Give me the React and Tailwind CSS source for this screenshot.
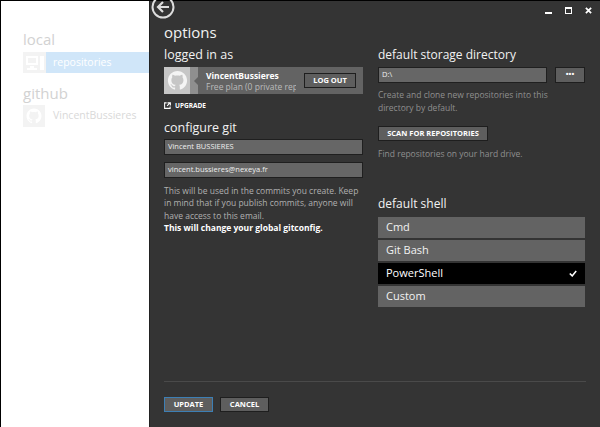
import React from 'react';

const GithubMark = ({ className }) => (
    <svg viewBox="0 0 24 24" className={className} fill="currentColor">
        <path d="M12 2C6.5 2 2 6.5 2 12c0 4.4 2.9 8.2 6.8 9.5.5.1.7-.2.7-.5v-1.700c-2.800.6-3.400-1.300-3.400-1.300-.5-1.200-1.100-1.500-1.100-1.500-.9-.6.1-.6.1-.6 1 .1 1.500 1 1.500 1 .9 1.500 2.300 1.100 2.900.8.1-.6.3-1.100.6-1.300-2.200-.3-4.500-1.100-4.500-5 0-1.100.4-2 1-2.700-.1-.3-.4-1.300.1-2.700 0 0 .8-.3 2.700 1 .8-.2 1.700-.3 2.500-.3s1.700.1 2.500.3c1.900-1.300 2.700-1 2.700-1 .5 1.400.2 2.400.1 2.700.6.7 1 1.600 1 2.700 0 3.900-2.300 4.700-4.500 5 .4.3.7.9.7 1.900V21c0 .3.2.6.7.5C19.100 20.200 22 16.400 22 12c0-5.500-4.500-10-10-10z" />
    </svg>
);

const ShellRow = ({ label, active }) => (
    <div className={`h-[21px] flex items-center justify-between pl-[8px] pr-[8px] text-[11px] ${active ? 'bg-black text-white' : 'bg-[#636363] text-[#f2f2f2]'}`}>
        <span>{label}</span>
        {active && (
            <svg viewBox="0 0 10 8" className="w-[8px] h-[7px]" fill="none" stroke="currentColor" strokeWidth="2">
                <path d="M1 4l3 3 5-6" />
            </svg>
        )}
    </div>
);

const Btn = ({ children, className = '' }) => (
    <button className={`h-[15px] bg-[#5e5e5e] border border-[#1e1e1e] text-[7.5px] font-bold text-white flex items-center justify-center ${className}`}>
        {children}
    </button>
);

const Field = ({ value, className = '' }) => (
    <div className={`h-[16px] bg-[#666666] border border-[#1f1f1f] px-[3px] flex items-center text-[7.5px] text-[#eeeeee] ${className}`}>
        {value}
    </div>
);

export default function App() {
    return (
        <div className="w-[600px] h-[427px] overflow-hidden flex bg-black pt-px pl-px font-['Open_Sans',sans-serif]">
            {/* sidebar */}
            <div className="w-[148px] shrink-0 bg-white pl-[22px] pt-[30px]">
                <div className="text-[15px] leading-[16px] text-[#d2d2d2]">local</div>
                <div className="flex mt-[5px] h-[21px]">
                    <div className="w-[23px] bg-[#f3f3f3] flex items-center justify-center">
                        <svg viewBox="0 0 20 16" className="w-[20px] h-[16px]" fill="#ffffff">
                            <path d="M1 1h12v9H1zM3 3v5h8V3zM5 11h4v2H5zM2 13h10v2H2zM15 1h4v14h-4z" fillRule="evenodd" />
                        </svg>
                    </div>
                    <div className="flex-1 bg-[#d0e6f9] pl-[7px] pt-px text-[10.5px] text-white flex items-center">repositories</div>
                </div>
                <div className="text-[15px] leading-[16px] text-[#d2d2d2] mt-[12px]">github</div>
                <div className="flex mt-[4px] h-[22px] items-center">
                    <div className="w-[22px] h-[22px] bg-[#f3f3f3] flex items-center justify-center">
                        <GithubMark className="w-[18px] h-[18px] text-white" />
                    </div>
                    <div className="pl-[8px] text-[10.5px] text-[#d9d9d9]">VincentBussieres</div>
                </div>
            </div>

            {/* options panel */}
            <div className="flex-1 bg-[#343434] relative flex flex-col pl-[14px] pr-[14px] border-l border-[#222222]">
                <svg viewBox="0 0 24 24" className="absolute left-[1px] top-[-6px] w-[24px] h-[24px] text-[#dddddd]" fill="none" stroke="currentColor">
                    <circle cx="12" cy="12" r="10.5" strokeWidth="2" />
                    <path d="M18 12H7M12 7l-5 5 5 5" strokeWidth="2.2" />
                </svg>
                <div className="absolute right-[8px] top-[6px] flex items-center gap-[13px] text-white">
                    <div className="w-[7px] h-[2px] bg-white mt-[5px]"></div>
                    <div className="w-[7px] h-[7px] border border-white border-t-2"></div>
                    <svg viewBox="0 0 8 8" className="w-[7px] h-[7px]" stroke="currentColor" strokeWidth="2"><path d="M1 1l6 6M7 1L1 7" /></svg>
                </div>

                <div className="text-[15px] leading-[18px] text-[#f2f2f2] mt-[22px]">options</div>

                <div className="flex gap-[15px] mt-[6px] flex-1">
                    <div className="w-[199px]">
                        <div className="text-[12.5px] leading-[16px] text-[#f2f2f2]">logged in as</div>
                        <div className="mt-[4px] h-[27px] bg-[#636363] flex items-center">
                            <div className="w-[26px] h-[27px] bg-[#c6c6c6] flex items-center justify-center">
                                <GithubMark className="w-[23px] h-[23px] text-[#f4f4f4]" />
                            </div>
                            <div className="w-[8px] h-full bg-[#8f8f8f] flex items-center justify-end">
                                <div className="border-y-[4px] border-y-transparent border-r-[4px] border-r-[#636363]"></div>
                            </div>
                            <div className="w-[98px] overflow-hidden whitespace-nowrap pl-[8px]">
                                <div className="text-[8.5px] leading-[11px] font-bold text-white">VincentBussieres</div>
                                <div className="text-[8.5px] leading-[11px] text-[#bbbbbb]">Free plan (0 private repos)</div>
                            </div>
                            <Btn className="w-[52px] ml-[8px]">LOG OUT</Btn>
                        </div>
                        <div className="mt-[7px] flex items-center gap-[4px] text-[6.5px] font-bold text-white">
                            <svg viewBox="0 0 8 8" className="w-[7px] h-[7px]" fill="none" stroke="currentColor" strokeWidth="1.2"><path d="M3 1H.7v6.300H7V5M4 1h3.300v3M7 1L3.500 4.500" /></svg>
                            UPGRADE
                        </div>

                        <div className="text-[12.5px] leading-[16px] text-[#f2f2f2] mt-[9px]">configure git</div>
                        <Field value="Vincent BUSSIERES" className="mt-[3px]" />
                        <Field value="vincent.bussieres@nexeya.fr" className="mt-[7px]" />
                        <div className="text-[8.5px] leading-[12.500px] text-[#b0b0b0] mt-[7px]">
                            This will be used in the commits you create. Keep in mind that if you publish commits, anyone will have access to this email.
                            <div className="font-bold text-white">This will change your global gitconfig.</div>
                        </div>
                    </div>

                    <div className="w-[207px]">
                        <div className="text-[12px] leading-[16px] text-[#f2f2f2]">default storage directory</div>
                        <div className="mt-[4px] flex">
                            <Field value="D:\" className="w-[169px]" />
                            <Btn className="w-[30px] ml-[8px] h-[16px]">•••</Btn>
                        </div>
                        <div className="text-[8.5px] leading-[13px] text-[#8f8f8f] mt-[5px]">Create and clone new repositories into this directory by default.</div>
                        <Btn className="w-[110px] mt-[12px]">SCAN FOR REPOSITORIES</Btn>
                        <div className="text-[8.5px] leading-[13px] text-[#8f8f8f] mt-[6px]">Find repositories on your hard drive.</div>
                        <div className="text-[12px] leading-[16px] text-[#f2f2f2] mt-[36px]">default shell</div>
                        <div className="mt-[5px] flex flex-col gap-[2px]">
                            <ShellRow label="Cmd" />
                            <ShellRow label="Git Bash" />
                            <ShellRow label="PowerShell" active />
                            <ShellRow label="Custom" />
                        </div>
                    </div>
                </div>

                <div className="border-t border-[#4a4a4a] h-[46px] flex items-start gap-[7px] pt-[15px]">
                    <Btn className="w-[49px] !border-[#3d7fb5]">UPDATE</Btn>
                    <Btn className="w-[49px]">CANCEL</Btn>
                </div>
            </div>
        </div>
    );
}
